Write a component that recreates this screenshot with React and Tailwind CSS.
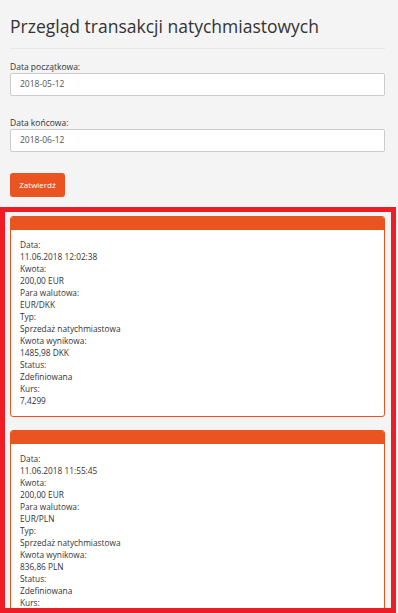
import React from "react";

const txs = [
  {
    data: "11.06.2018 12:02:38",
    kwota: "200,00 EUR",
    para: "EUR/DKK",
    typ: "Sprzedaż natychmiastowa",
    wynik: "1485,98 DKK",
    status: "Zdefiniowana",
    kurs: "7,4299",
  },
  {
    data: "11.06.2018 11:55:45",
    kwota: "200,00 EUR",
    para: "EUR/PLN",
    typ: "Sprzedaż natychmiastowa",
    wynik: "836,86 PLN",
    status: "Zdefiniowana",
    kurs: "4,1843",
  },
];

function Card({ t }) {
  const rows = [
    ["Data:", t.data],
    ["Kwota:", t.kwota],
    ["Para walutowa:", t.para],
    ["Typ:", t.typ],
    ["Kwota wynikowa:", t.wynik],
    ["Status:", t.status],
    ["Kurs:", t.kurs],
  ];
  return (
    <div className="border border-[#e95420] rounded-[3px] bg-white overflow-hidden">
      <div className="h-[13px] bg-[#e95420]" />
      <div className="pl-[9px] pt-[9px] pb-[9px] text-[8.3px] leading-[12px] text-[#333]">
        {rows.map(([l, v]) => (
          <React.Fragment key={l}>
            <div>{l}</div>
            <div>{v}</div>
          </React.Fragment>
        ))}
      </div>
    </div>
  );
}

export default function App() {
  return (
    <div
      className="relative w-[398px] h-[613px] overflow-hidden bg-[#f4f4f4]"
      style={{ fontFamily: '"Open Sans", "Noto Sans", sans-serif' }}
    >
      <div className="pl-[10px] pr-[13px]">
        <h1 className="pt-[14px] text-[17.5px] leading-[24px] font-normal text-[#333]">
          Przegląd transakcji natychmiastowych
        </h1>
        <div className="mt-[10px] border-t border-[#e6e6e6]" />

        <div className="mt-[12px] text-[8.5px] leading-[12px] text-[#333]">Data początkowa:</div>
        <div className="h-[23px] bg-white border border-[#cccccc] rounded-[2px] flex items-center pl-[9px] text-[8.5px] text-[#555]">
          2018-05-12
        </div>

        <div className="mt-[21px] text-[8.5px] leading-[12px] text-[#333]">Data końcowa:</div>
        <div className="h-[23px] bg-white border border-[#cccccc] rounded-[2px] flex items-center pl-[9px] text-[8.5px] text-[#555]">
          2018-06-12
        </div>

        <button className="mt-[21px] h-[24px] w-[55px] bg-[#e95420] rounded-[3px] text-white text-[8px] font-medium flex items-center justify-center">
          Zatwierdź
        </button>

        <div className="mt-[19px] flex flex-col gap-[13px]">
          {txs.map((t, i) => (
            <Card key={i} t={t} />
          ))}
        </div>
      </div>

      <div className="absolute left-0 top-[207px] w-[396px] h-[406px] border-[5px] border-[#ee1c25] pointer-events-none" />
    </div>
  );
}
